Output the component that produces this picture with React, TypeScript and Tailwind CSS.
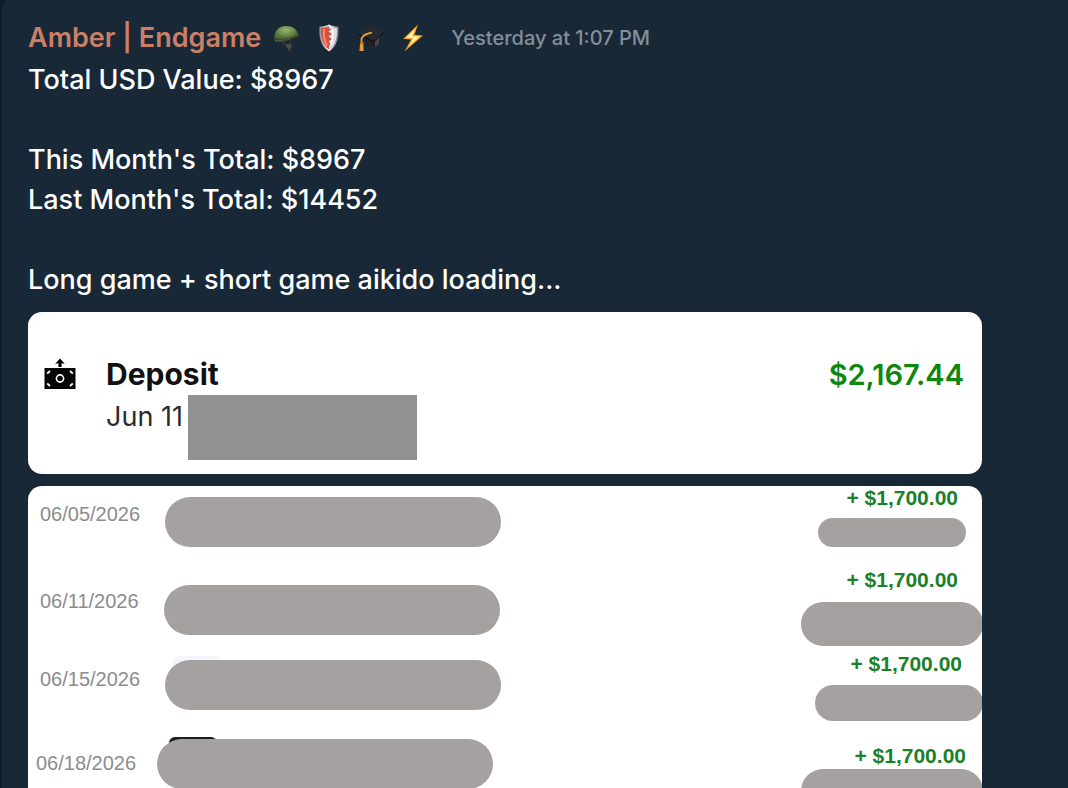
import React from "react";

interface Transfer {
  date: string;
  amount: string;
  rowClass: string;
  dateClass: string;
  barClass: string;
  amountClass: string;
  tagClass: string;
  mark?: string;
}

const transfers: Transfer[] = [
  {
    date: "06/05/2026",
    amount: "+ $1,700.00",
    rowClass: "h-[82px]",
    dateClass: "w-[137px] pl-3 pt-4",
    barClass: "mt-[11px]",
    amountClass: "pr-6",
    tagClass: "mt-2 mr-4 h-[29px] w-[148px]",
  },
  {
    date: "06/11/2026",
    amount: "+ $1,700.00",
    rowClass: "h-[84px]",
    dateClass: "w-[136px] pl-3 pt-[21px]",
    barClass: "mt-[17px]",
    amountClass: "pr-6",
    tagClass: "mt-[10px] -mr-px h-[44px] w-[182px]",
  },
  {
    date: "06/15/2026",
    amount: "+ $1,700.00",
    rowClass: "h-[87px]",
    dateClass: "w-[137px] pl-3 pt-[15px]",
    barClass: "mt-2",
    amountClass: "pr-5",
    tagClass: "mt-[9px] -mr-px h-[36px] w-[168px]",
    mark: "left-2 -top-1 w-12 h-5 bg-[#f4f4fa]",
  },
  {
    date: "06/18/2026",
    amount: "+ $1,700.00",
    rowClass: "h-[87px]",
    dateClass: "w-[129px] pl-2 pt-3",
    barClass: "",
    amountClass: "pr-4 pt-[5px]",
    tagClass: "mt-px -mr-px h-[44px] w-[182px]",
    mark: "left-3 -top-[2px] w-12 h-5 bg-[#1c1c1c]",
  },
];

const HelmetIcon: React.FC = () => (
  <svg viewBox="0 0 28 28" className="w-7 h-7">
    <defs>
      <radialGradient id="helmet" cx="0.45" cy="0.25" r="0.7">
        <stop offset="0" stopColor="#9ab570" />
        <stop offset="0.5" stopColor="#628746" />
        <stop offset="1" stopColor="#34502b" />
      </radialGradient>
    </defs>
    <path d="M10 18.5 L15 22 L19 17" stroke="#4a4038" strokeWidth="1.2" fill="none" />
    <path d="M13 20.5 L17.5 19.5 L19 22.5 L17.5 24 L17.5 27 L15.5 26.5 L15 24 L13 23 Z" fill="#504a47" />
    <path d="M1.5 17.5 C0 8 5 2 13 2 C20 1.5 24 6 25 10 L27 11.5 C23 13 20 14 16 16 C11 17.5 6 19 1.5 17.5 Z" fill="url(#helmet)" />
    <path d="M2 16.5 C9 17 17 14.5 26 11.2" stroke="#433b2e" strokeWidth="2" fill="none" />
    <path d="M3 16.5 C9 17 17 14.5 24 12" stroke="#8a7d60" strokeWidth="0.8" strokeDasharray="1.4 1.6" fill="none" />
  </svg>
);

const ShieldIcon: React.FC = () => (
  <svg viewBox="0 0 28 28" className="w-7 h-7">
    <defs>
      <linearGradient id="shield" x1="0" x2="1">
        <stop offset="0" stopColor="#8e9498" />
        <stop offset="0.5" stopColor="#eef0f1" />
        <stop offset="1" stopColor="#747b80" />
      </linearGradient>
    </defs>
    <path d="M14 0.5 C17 2 20 2.4 23.5 2.6 C24.2 13 22.5 22 14 27.5 C5.5 22 3.8 13 4.5 2.6 C8 2.4 11 2 14 0.5 Z" fill="url(#shield)" />
    <path d="M14 2.2 C16.5 3.4 19 3.9 22 4 C22.4 13 20.8 20.5 14 25.6 Z" fill="#dce0e2" />
    <path d="M14 2.2 C11.5 3.4 9 3.9 6 4 C5.6 13 7.2 20.5 14 25.6 L14 22 L16.5 20 L13.5 17.5 L17 15 L13.5 12.5 L17 10 L13.5 7.5 L16 5.5 L14 4 Z" fill="#d9503f" />
    <path d="M9 5 C8.5 12 9.5 18 12 22" stroke="#ef8b7d" strokeWidth="2" fill="none" />
    <path d="M17.5 6 C18 12 17 18 15.5 21" stroke="#ffffff" strokeWidth="1.5" fill="none" />
  </svg>
);

const CapIcon: React.FC = () => (
  <svg viewBox="0 0 28 28" className="w-7 h-7">
    <path d="M9 13 L9 19 C12 23 18 24 22 20 L22 12 Z" fill="#202123" />
    <path d="M18 15 L22 12 L22 20 C21 21.5 19.5 22.3 18 22.5 Z" fill="#424447" />
    <path d="M1 9.5 L14.5 1.5 L27.5 7.5 L16.5 17 Z" fill="#28292c" />
    <path d="M1 9.5 L16.5 17 L27.5 7.5 L27.5 8.6 L16.5 18.4 L1 10.8 Z" fill="#111214" />
    <path d="M15 8.5 C10 10 5.5 10.5 4.5 15 L4.5 20" stroke="#e6a33c" strokeWidth="1.7" fill="none" />
    <path d="M3.2 18 L6.4 18 L6.8 27 L2.4 27 Z" fill="#d98f25" />
    <path d="M4.6 20 L4.6 27" stroke="#f6c15b" strokeWidth="0.8" />
    <path d="M3 19.2 L6.6 19.2" stroke="#8b5713" strokeWidth="0.8" />
  </svg>
);

const BoltIcon: React.FC = () => (
  <svg viewBox="0 0 28 28" className="w-7 h-7">
    <path d="M19 0.5 L4 15 L12 15.6 L5.5 27.5 L24 11.6 L15.4 10.8 Z" fill="#f49a1c" />
    <path d="M17 3.8 L6.5 14 L14 14.4 L9.2 23 L21.4 12.6 L13.6 12 Z" fill="#ffe36b" />
    <path d="M15.5 6.2 L8.6 13 L15.4 13.5 L12.4 18.4 L18.6 13.4 L12 12.8 Z" fill="#fffbe0" />
  </svg>
);

const DepositIcon: React.FC = () => (
  <svg viewBox="0 0 32 32" className="w-8 h-8">
    <path d="M16 0.5 L20.8 5.8 L17.6 5.3 L17.6 9 L14.4 9 L14.4 5.3 L11.2 5.8 Z" fill="#050505" />
    <rect x="0.5" y="10" width="31" height="21" fill="#050505" />
    <circle cx="16" cy="20.5" r="3.6" stroke="#fff" strokeWidth="1.6" fill="none" />
    <path d="M3.2 15.5 L6 13 M26 13 L28.8 15.5 M3.2 25.5 L6 28 M26 28 L28.8 25.5" stroke="#fff" strokeWidth="1.7" />
  </svg>
);

const App: React.FC = () => {
  return (
    <div className="h-screen overflow-hidden bg-[#0f1c29] pl-[2px] font-['Inter',sans-serif]">
      <main className="h-full rounded-tl-lg bg-[#182837] pl-[26px] pr-4 pt-4">
        <header className="flex items-center h-11">
          <h1 className="text-[27px] leading-10 font-semibold text-[#cb7f66] whitespace-nowrap">
            Amber | Endgame
          </h1>
          <div className="flex gap-[14px] ml-3">
            <HelmetIcon />
            <ShieldIcon />
            <CapIcon />
            <BoltIcon />
          </div>
          <time className="ml-6 text-xl font-medium text-[#848e97] whitespace-nowrap">
            Yesterday at 1:07 PM
          </time>
        </header>

        <div className="text-[27px] leading-10 font-medium text-white">
          <p>Total USD Value: $8967</p>
          <p className="mt-10">This Month's Total: $8967</p>
          <p>Last Month's Total: $14452</p>
          <p className="mt-10">Long game + short game aikido loading...</p>
        </div>

        <section className="flex items-start mt-3 h-[162px] w-full max-w-[954px] rounded-[14px] bg-white pl-4 pr-[18px] pt-[42px]">
          <div className="mt-1">
            <DepositIcon />
          </div>
          <div className="ml-[30px]">
            <h2 className="text-[30px] leading-[41px] font-bold text-[#111]">Deposit</h2>
            <div className="flex items-start">
              <span className="text-[27px] leading-[44px] text-[#2b2b2b]">Jun 11</span>
              <span className="ml-[5px] w-[229px] h-[65px] bg-[#919191]" />
            </div>
          </div>
          <span className="ml-auto text-[29px] leading-[41px] font-semibold text-[#0d870d]">$2,167.44</span>
        </section>

        <section className="mt-3 w-full max-w-[954px] overflow-hidden rounded-[14px] bg-white font-['Liberation_Sans',sans-serif]">
          {transfers.map((item) => (
            <div key={item.date} className={`flex items-start ${item.rowClass}`}>
              <time className={`shrink-0 text-xl leading-6 text-[#8c8c8c] ${item.dateClass}`}>
                {item.date}
              </time>
              <div className={`relative w-[336px] h-[50px] ${item.barClass}`}>
                {item.mark && <span className={`absolute rounded-md ${item.mark}`} />}
                <span className="relative block h-full rounded-full bg-[#a5a1a0]" />
              </div>
              <div className="flex flex-col items-end ml-auto">
                <span className={`text-[21px] leading-6 font-bold text-[#1b8029] ${item.amountClass}`}>
                  {item.amount}
                </span>
                <span className={`rounded-full bg-[#a5a1a0] ${item.tagClass}`} />
              </div>
            </div>
          ))}
        </section>
      </main>
    </div>
  );
};

export default App;
